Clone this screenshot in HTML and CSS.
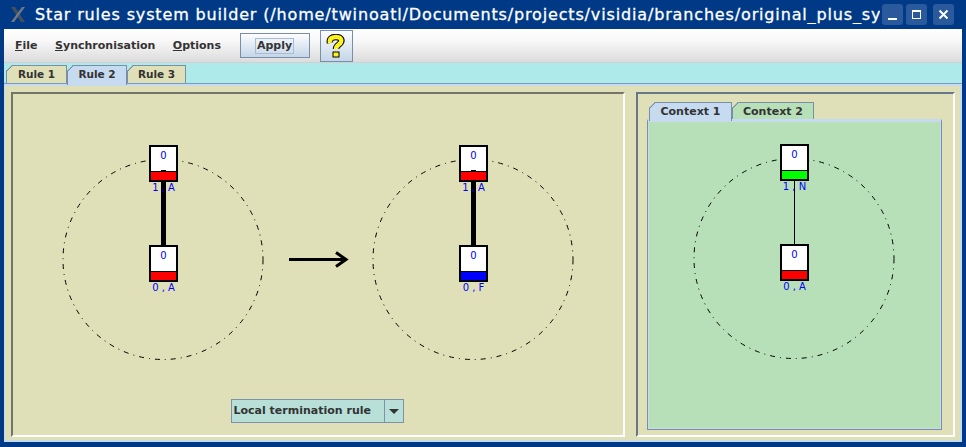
FILE: index.html
```html
<!DOCTYPE html>
<html>
	<head>
		<title>Star rules system builder</title>
		<link rel="stylesheet" href="styles.css">
	</head>
	<body>
		<div class="window">
			<div class="titlebar">
				<svg class="wm-logo" width="16" height="17" viewBox="0 0 16 17">
					<path d="M1 1 L5 1 L15 16 L11 16 Z" fill="#44505e"/>
					<path d="M15 1 L12 1 L1 16 L4 16 Z" fill="#6f7a82"/>
				</svg>
				<div class="title-text">Star rules system builder (/home/twinoatl/Documents/projects/visidia/branches/original_plus_sy</div>
				<div class="wm-buttons">
					<div class="wm-btn"><svg width="21" height="21" viewBox="0 0 21 21"><rect x="6" y="14" width="9" height="2" fill="#fff"/></svg></div>
					<div class="wm-btn"><svg width="21" height="21" viewBox="0 0 21 21"><rect x="6.5" y="6.5" width="8" height="8" fill="none" stroke="#fff"/><rect x="6" y="6" width="9" height="2" fill="#fff"/></svg></div>
					<div class="wm-btn close"><svg width="21" height="21" viewBox="0 0 21 21"><path d="M6.5 6.5 L14.5 14.5 M14.5 6.5 L6.5 14.5" stroke="#fff" stroke-width="2"/></svg></div>
				</div>
			</div>

			<div class="menubar">
				<span class="menu"><u>F</u>ile</span>
				<span class="menu"><u>S</u>ynchronisation</span>
				<span class="menu"><u>O</u>ptions</span>
				<button class="apply"><span class="focus">Apply</span></button>
				<button class="help">
					<svg width="20" height="24" viewBox="0 0 20 24">
						<defs>
							<pattern id="dither" width="2" height="2" patternUnits="userSpaceOnUse">
								<rect width="2" height="2" fill="#fff000"/>
								<rect width="1" height="1" fill="#fff980"/>
							</pattern>
						</defs>
						<path d="M4 9 C3 4 7 3 10 3 C15 3 16 6 15 8 C14 11 10 11 10 15" fill="none" stroke="#000" stroke-width="6.5"/>
						<rect x="6.5" y="17.5" width="7" height="6" fill="#000"/>
						<path d="M4 9 C3 4 7 3 10 3 C15 3 16 6 15 8 C14 11 10 11 10 15" fill="none" stroke="url(#dither)" stroke-width="4.5"/>
						<rect x="7.5" y="18.5" width="5" height="4" fill="url(#dither)"/>
					</svg>
				</button>
			</div>

			<div class="tabstrip">
				<div class="tab beige first">Rule 1</div>
				<div class="tab active">Rule 2</div>
				<div class="tab beige last">Rule 3</div>
			</div>

			<div class="content">
				<div class="panel left-panel">
					<svg class="canvas" width="611" height="305" viewBox="13 94 611 305">
						<circle class="orbit" cx="163" cy="259.5" r="100"/>
						<circle class="orbit" cx="473" cy="259.5" r="100"/>
						<rect x="161" y="170" width="5" height="76"/>
						<rect x="471" y="170" width="5" height="76"/>

						<g class="node">
							<rect class="box" x="150" y="146" width="27" height="35"/>
							<rect class="red" x="151" y="172" width="25" height="8"/>
							<rect x="151" y="171" width="25" height="1"/>
							<rect x="161" y="170" width="5" height="1"/>
							<text x="163.5" y="159">0</text>
							<text x="163.5" y="191">1 , A</text>
						</g>
						<g class="node">
							<rect class="box" x="150" y="246" width="27" height="35"/>
							<rect class="red" x="151" y="272" width="25" height="8"/>
							<rect x="151" y="271" width="25" height="1"/>
							<text x="163.5" y="259">0</text>
							<text x="163.5" y="291">0 , A</text>
						</g>
						<g class="node">
							<rect class="box" x="460" y="146" width="27" height="35"/>
							<rect class="red" x="461" y="172" width="25" height="8"/>
							<rect x="461" y="171" width="25" height="1"/>
							<rect x="471" y="170" width="5" height="1"/>
							<text x="473.5" y="159">0</text>
							<text x="473.5" y="191">1 , A</text>
						</g>
						<g class="node">
							<rect class="box" x="460" y="246" width="27" height="35"/>
							<rect class="blue" x="461" y="272" width="25" height="8"/>
							<rect x="461" y="271" width="25" height="1"/>
							<text x="473.5" y="259">0</text>
							<text x="473.5" y="291">0 , F</text>
						</g>

						<path class="arrow" d="M289 259.5 H346 M336 252.5 L346 259.5 L336 266.5"/>
					</svg>
					<div class="combo">
						<div class="combo-value">Local termination rule</div>
						<div class="combo-arrow"><span class="caret"></span></div>
					</div>
				</div>

				<div class="panel right-panel">
					<div class="subtabs">
						<div class="tab active small">Context 1</div>
						<div class="tab green small">Context 2</div>
					</div>
					<div class="tabpane">
						<svg class="canvas" width="291" height="304" viewBox="649 121 291 304">
							<circle class="orbit" cx="794" cy="258.5" r="100"/>
							<rect x="794" y="170" width="1" height="75"/>
							<g class="node">
								<rect class="box" x="781" y="145" width="27" height="35"/>
								<rect class="lime" x="782" y="171" width="25" height="8"/>
								<rect x="782" y="170" width="25" height="1"/>
								<text x="794.5" y="158">0</text>
								<text x="794.5" y="190">1 , N</text>
							</g>
							<g class="node">
								<rect class="box" x="781" y="245" width="27" height="35"/>
								<rect class="red" x="782" y="271" width="25" height="8"/>
								<rect x="782" y="270" width="25" height="1"/>
								<text x="794.5" y="258">0</text>
								<text x="794.5" y="290">0 , A</text>
							</g>
						</svg>
					</div>
				</div>
			</div>
		</div>
	</body>
</html>
```

FILE: styles.css
```css
html, body {
	margin: 0;
	padding: 0;
}
body {
	width: 966px;
	height: 447px;
	overflow: hidden;
	font-family: "DejaVu Sans", sans-serif;
	background: #fff;
}
.window {
	height: 447px;
	box-sizing: border-box;
	display: flex;
	flex-direction: column;
	background: #003a86;
	padding: 0 4px 5px 4px;
}

/* title bar */
.titlebar {
	height: 29px;
	flex: none;
	display: flex;
	align-items: center;
	color: #fff;
	position: relative;
}
.wm-logo {
	margin-left: 6px;
	flex: none;
}
.title-text {
	margin-left: 9px;
	width: 845px;
	flex: none;
	overflow: hidden;
	white-space: nowrap;
	font-size: 16px;
	letter-spacing: 0.85px;
	-webkit-text-stroke: 0.3px #fff;
}
.wm-buttons {
	display: flex;
	gap: 3px;
	margin-left: 2px;
}
.wm-btn {
	width: 21px;
	height: 21px;
	background: #2a5a9c;
	border-radius: 3px;
}
.wm-btn.close {
	margin-left: 3px;
}

/* menu */
.menubar {
	height: 33px;
	flex: none;
	display: flex;
	align-items: center;
	padding-left: 11px;
	background: linear-gradient(#ffffff, #f8f8f8 35%, #dcdcdc);
	border-bottom: 1px solid #cfcfd4;
	font-size: 11px;
	font-weight: bold;
	color: #333;
}
.menu {
	margin-right: 17.5px;
}
.apply {
	width: 70px;
	height: 25px;
	margin-left: 1px;
	padding: 0;
	border: 1px solid #7a8ea8;
	background: linear-gradient(#fdfdfe, #c4d6e8);
	display: flex;
	align-items: center;
	justify-content: center;
	font: bold 11px "DejaVu Sans", sans-serif;
	color: #333;
}
.focus {
	border: 1px solid #a8bcd4;
	padding: 0 1px;
	line-height: 14px;
}
.help {
	width: 33px;
	height: 32px;
	margin-left: 10px;
	padding: 0;
	border: 1px solid #7a8ea8;
	background: linear-gradient(#fdfdfe, #c4d6e8);
	display: flex;
	align-items: center;
	justify-content: center;
}

/* tabs */
.tabstrip {
	height: 20px;
	flex: none;
	display: flex;
	align-items: flex-end;
	padding-left: 2px;
	background: #aeeaea;
	border-bottom: 1px solid #7a9bc0;
	box-sizing: content-box;
}
.tab {
	position: relative;
	box-sizing: border-box;
	width: 60px;
	height: 18px;
	text-align: center;
	font-size: 10.5px;
	font-weight: bold;
	line-height: 17px;
	color: #333;
	border: 1px solid #7a8ea8;
	border-bottom: none;
	clip-path: polygon(6px 0, 100% 0, 100% 100%, 0 100%, 0 6px);
}
.tab::before {
	content: "";
	position: absolute;
	left: -1px;
	top: -1px;
	width: 7px;
	height: 7px;
	background: linear-gradient(135deg, transparent 4px, #7a8ea8 4px, #7a8ea8 5px, transparent 5px);
}
.tab.first {
	width: 61px;
}
.tab.last {
	width: 59px;
}
.tab.beige {
	background: #e0e0b8;
}
.tab.green {
	background: #b8e0b8;
	width: 82px;
}
.tab.active {
	background: #c6daf0;
	height: 20px;
	margin-bottom: -2px;
	z-index: 1;
}
.tab.small {
	font-size: 11px;
}
.tab.active.small {
	width: 83px;
	height: 19px;
	margin-bottom: -1px;
}

/* main area */
.content {
	flex: 1;
	display: flex;
	gap: 11px;
	background: #e0e0b8;
	border-top: 2px solid #c6daf0;
	border-left: 1px solid #c6daf0;
	border-right: 2px solid #c6daf0;
	border-bottom: 2px solid #c6daf0;
	padding: 6px 7px 3px 6px;
	min-height: 0;
}
.panel {
	box-sizing: border-box;
	border: 2px solid #fff;
	border-top-color: #74746a;
	border-left-color: #74746a;
	background: #e0e0b8;
}
.left-panel {
	width: 614px;
	display: flex;
	flex-direction: column;
	align-items: center;
}
.right-panel {
	width: 319px;
	border-top-color: #687888;
	border-left-color: #687888;
	padding: 8px 11px 5px 9px;
	display: flex;
	flex-direction: column;
}
.subtabs {
	display: flex;
	height: 17px;
	padding-left: 2px;
	flex: none;
}
.subtabs .tab {
	height: 17px;
}
.tabpane {
	flex: 1;
	background: #b8e0b8;
	border: 1px solid #7a8ea8;
	border-top: 2px solid #c6daf0;
	box-shadow: inset 0 0 0 1px #c6daf0;
	padding: 0 1px;
	min-height: 0;
}
.canvas {
	display: block;
	flex: none;
}

/* diagram */
.orbit {
	fill: none;
	stroke: #000;
	stroke-width: 1;
	stroke-dasharray: 5 5 1 5;
}
.node .box {
	fill: #fff;
	stroke: #000;
	stroke-width: 2;
}
.node .red {
	fill: #ff0000;
}
.node .blue {
	fill: #0000ff;
}
.node .lime {
	fill: #00ff00;
}
.node text {
	font-family: "DejaVu Sans", sans-serif;
	font-size: 10px;
	fill: #0000ff;
	text-anchor: middle;
}
.arrow {
	fill: none;
	stroke: #000;
	stroke-width: 3;
}

/* combo box */
.combo {
	box-sizing: border-box;
	width: 173px;
	height: 24px;
	flex: none;
	display: flex;
	margin-right: 2px;
	background: #b8e0d8;
	border: 1px solid #8090a8;
	font-size: 11px;
	font-weight: bold;
	color: #333;
	line-height: 22px;
}
.combo-value {
	flex: 1;
	padding-left: 2px;
	border-right: 1px solid #8090a8;
	white-space: nowrap;
}
.combo-arrow {
	width: 18px;
	display: flex;
	align-items: center;
	justify-content: center;
}
.caret {
	width: 0;
	height: 0;
	border-left: 5px solid transparent;
	border-right: 5px solid transparent;
	border-top: 5px solid #333;
}
```
